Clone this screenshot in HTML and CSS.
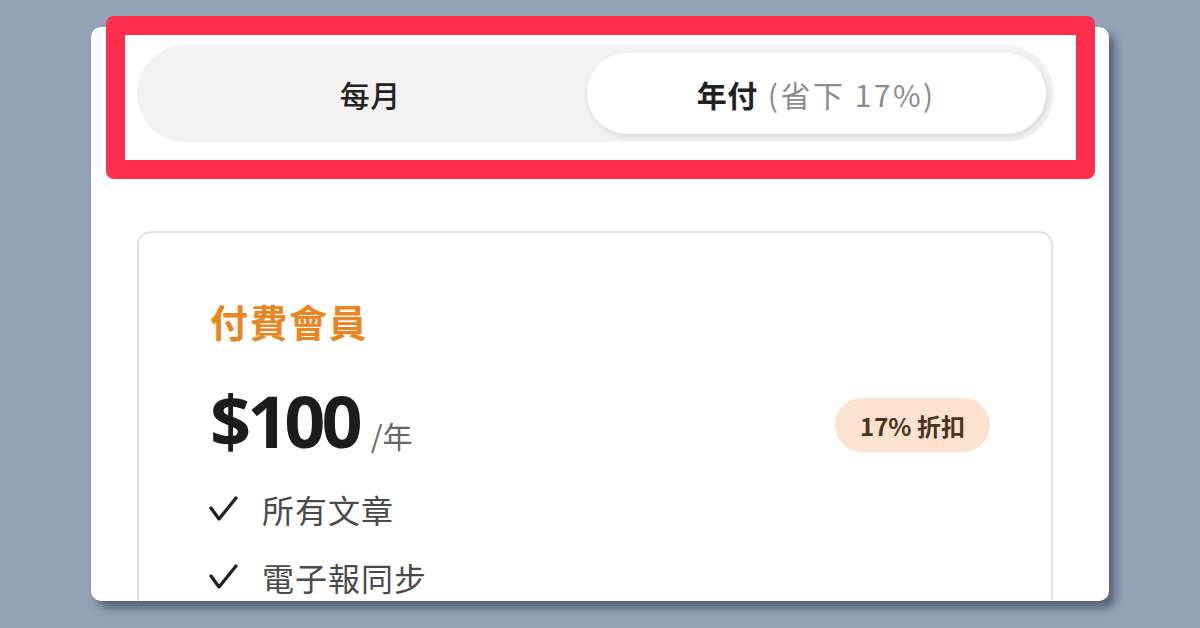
FILE: index.html
```html
<!DOCTYPE html>
<html lang="zh-Hant">
<head>
<meta charset="utf-8">
<title>Pricing</title>
<link rel="stylesheet" href="styles.css">
</head>
<body>
<div class="panel">
  <div class="track">
    <div class="opt">每月</div>
    <div class="opt active"><b>年付</b> <span class="save">(省下 17%)</span></div>
  </div>
  <div class="card">
    <div class="title">付費會員</div>
    <div class="price-row">
      <div class="price"><span class="amount">$100</span><span class="per">/年</span></div>
      <div class="badge">17% 折扣</div>
    </div>
    <ul class="features">
      <li><svg class="check" width="30" height="28" viewBox="0 0 30 28"><polyline points="2,13 10,24 27,3" fill="none" stroke="#222" stroke-width="3.3" stroke-linecap="round" stroke-linejoin="round"/></svg><span>所有文章</span></li>
      <li><svg class="check" width="30" height="28" viewBox="0 0 30 28"><polyline points="2,13 10,24 27,3" fill="none" stroke="#222" stroke-width="3.3" stroke-linecap="round" stroke-linejoin="round"/></svg><span>電子報同步</span></li>
    </ul>
  </div>
</div>
<div class="highlight"></div>
</body>
</html>
```
FILE: styles.css
```css
html, body {
  margin: 0;
  padding: 0;
}
body {
  width: 1200px;
  height: 628px;
  overflow: hidden;
  background: #93a2b7;
  font-family: "Noto Sans CJK TC", "Noto Sans", sans-serif;
  color: #222;
  position: relative;
}
.panel {
  margin: 27px 0 0 91px;
  width: 1018px;
  height: 574px;
  box-sizing: border-box;
  padding: 18px 0 0 46px;
  background: #fff;
  border-radius: 10px;
  overflow: hidden;
  box-shadow: 6px 7px 9px rgba(55, 65, 85, 0.65);
}
.track {
  width: 917px;
  height: 97px;
  box-sizing: border-box;
  padding: 8px;
  background: #f2f2f2;
  border-radius: 49px;
  display: grid;
  grid-template-columns: 1fr 1fr;
}
.opt {
  display: flex;
  align-items: center;
  justify-content: center;
  font-size: 30px;
  font-weight: 500;
  color: #222;
  border-radius: 41px;
  letter-spacing: 0.5px;
}
.opt.active {
  background: #fff;
  box-shadow: 2px 3px 6px rgba(0, 0, 0, 0.10);
  margin-left: -9px;
}
.opt b {
  font-weight: 700;
  margin-right: 10px;
}
.save {
  color: #8c8c8c;
  font-weight: 400;
  letter-spacing: 2.5px;
}
.card {
  margin-top: 89px;
  width: 916px;
  height: 420px;
  box-sizing: border-box;
  border: 2px solid #e1e1e1;
  border-radius: 14px;
  padding: 64px 61px 0 71px;
}
.title {
  font-size: 38px;
  line-height: 48px;
  font-weight: 700;
  color: #ea8520;
  letter-spacing: 1.5px;
}
.price-row {
  margin-top: 35px;
  height: 80px;
  display: flex;
  align-items: center;
  justify-content: space-between;
}
.price {
  display: flex;
  align-items: baseline;
}
.amount {
  font-family: "Open Sans", "Noto Sans", sans-serif;
  font-size: 72px;
  line-height: 80px;
  font-weight: 700;
  letter-spacing: -4px;
  color: #1c1c1c;
}
.per {
  font-size: 30px;
  color: #666;
  margin-left: 12px;
}
.badge {
  margin-top: 10px;
  width: 155px;
  height: 54px;
  border-radius: 27px;
  background: #fde3cf;
  color: #4a3322;
  font-size: 24px;
  font-weight: 600;
  display: flex;
  align-items: center;
  justify-content: center;
}
.features {
  list-style: none;
  margin: 15px 0 0 0;
  padding: 0;
}
.features li {
  height: 68px;
  display: flex;
  align-items: center;
  gap: 23px;
  font-size: 32px;
  letter-spacing: 1px;
  color: #4a4a4a;
}
.check {
  margin-left: -1px;
}
.highlight {
  position: absolute;
  left: 106px;
  top: 16px;
  width: 989px;
  height: 163px;
  box-sizing: border-box;
  border: 19px solid #ff2e4c;
  border-radius: 8px;
}
```
